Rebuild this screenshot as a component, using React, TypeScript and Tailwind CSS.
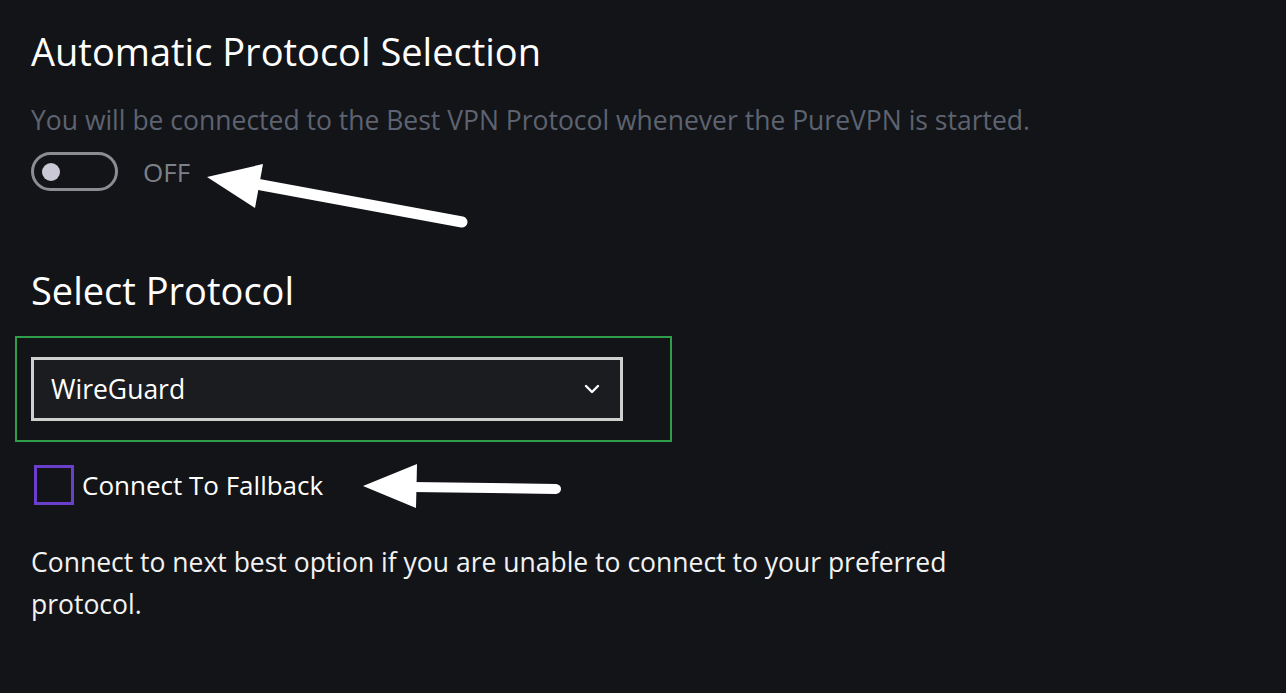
export default function App() {
  return (
    <div className="relative min-h-screen w-full overflow-hidden bg-[#131418] pl-[31px] pt-[25px] font-['Open_Sans',sans-serif]">
      {/* Automatic protocol */}
      <h1 className="text-[38px] leading-[52px] text-white">Automatic Protocol Selection</h1>
      <p className="mt-[26px] text-[26.5px] leading-[34px] text-[#5d6370]">
        You will be connected to the Best VPN Protocol whenever the PureVPN is started.
      </p>
      <div className="mt-[15px] flex items-center gap-[25px]">
        <div className="flex h-[39px] w-[87px] items-center rounded-full border-[3px] border-[#8b8d93] pl-[8px]">
          <div className="h-[18px] w-[18px] rounded-full bg-[#cbc8d6]" />
        </div>
        <span className="text-[26px] leading-[34px] text-[#7d8088]">OFF</span>
      </div>

      {/* Select protocol */}
      <h2 className="mt-[73px] text-[38px] leading-[52px] text-white">Select Protocol</h2>
      <div className="-ml-[16px] mt-[20px] w-[657px] border-[2px] border-[#2e9f48] px-[14px] py-[19px]">
        <div className="flex h-[64px] w-[592px] items-center justify-between border-[3px] border-[#cfcfcf] bg-[#1b1c20] pl-[17px] pr-[20px]">
          <span className="text-[26.5px] leading-[34px] text-white">WireGuard</span>
          <svg width="16" height="10" viewBox="0 0 16 10" fill="none">
            <path d="M2 2l6 6 6-6" stroke="#ffffff" strokeWidth="2.4" strokeLinecap="round" strokeLinejoin="round" />
          </svg>
        </div>
      </div>

      <div className="mt-[23px] flex items-center gap-[8px] pl-[3px]">
        <div className="h-[40px] w-[40px] border-[3px] border-[#6a3fcc]" />
        <span className="text-[26px] leading-[34px] text-white">Connect To Fallback</span>
      </div>

      <p className="mt-[36px] max-w-[935px] text-[26.5px] leading-[42px] text-[#f2f2f2]">
        Connect to next best option if you are unable to connect to your preferred protocol.
      </p>

      {/* annotation arrows */}
      <svg className="pointer-events-none absolute left-0 top-0" width="1286" height="693" viewBox="0 0 1286 693">
        <line x1="462" y1="222" x2="245" y2="182" stroke="#ffffff" strokeWidth="11" strokeLinecap="round" />
        <polygon points="207,177 263,164 255,208" fill="#ffffff" />
        <line x1="556" y1="489" x2="412" y2="487" stroke="#ffffff" strokeWidth="10" strokeLinecap="round" />
        <polygon points="363,486 417,464 416,508" fill="#ffffff" />
      </svg>
    </div>
  );
}
